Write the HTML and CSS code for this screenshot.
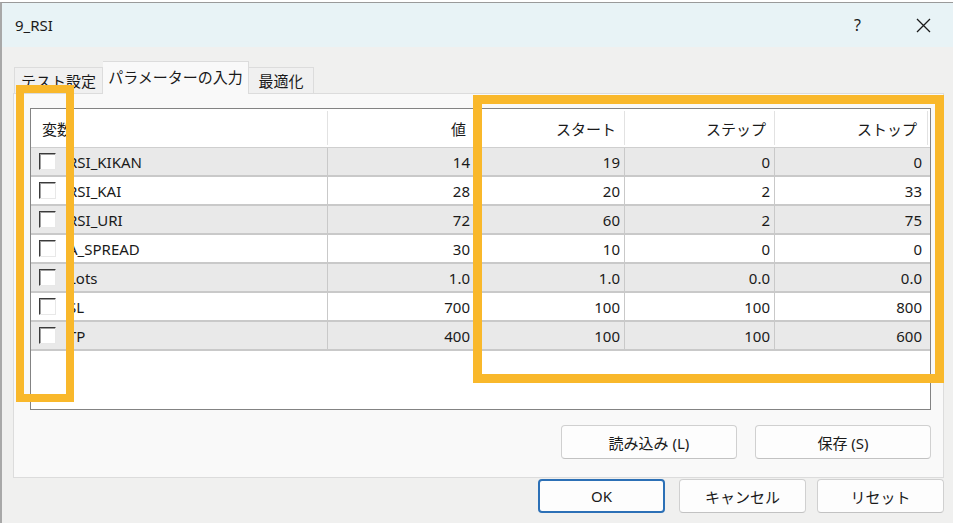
FILE: index.html
```html
<!DOCTYPE html>
<html lang="ja">
<head>
  <meta charset="UTF-8">
  <title>9_RSI</title>
  <link rel="stylesheet" href="styles.css">
</head>
<body>
  <div class="window">
    <div class="titlebar">
      <span class="title">9_RSI</span>
      <span class="help">?</span>
      <span class="close">
        <svg width="15" height="15" viewBox="0 0 15 15"><path d="M1 1 L14 14 M14 1 L1 14" stroke="#1a1a1a" stroke-width="1.3" fill="none"/></svg>
      </span>
    </div>

    <div class="client">
      <div class="tabs">
        <div class="tab">テスト設定</div>
        <div class="tab active">パラメーターの入力</div>
        <div class="tab">最適化</div>
      </div>

      <div class="panel">
        <div class="list">
          <div class="row head">
            <div class="cell name">変数</div>
            <div class="cell num">値</div>
            <div class="cell num">スタート</div>
            <div class="cell num">ステップ</div>
            <div class="cell num">ストップ</div>
          </div>
          <div class="row odd">
            <div class="cell name"><span class="check"></span>RSI_KIKAN</div>
            <div class="cell num">14</div><div class="cell num">19</div><div class="cell num">0</div><div class="cell num">0</div>
          </div>
          <div class="row">
            <div class="cell name"><span class="check"></span>RSI_KAI</div>
            <div class="cell num">28</div><div class="cell num">20</div><div class="cell num">2</div><div class="cell num">33</div>
          </div>
          <div class="row odd">
            <div class="cell name"><span class="check"></span>RSI_URI</div>
            <div class="cell num">72</div><div class="cell num">60</div><div class="cell num">2</div><div class="cell num">75</div>
          </div>
          <div class="row">
            <div class="cell name"><span class="check"></span>A_SPREAD</div>
            <div class="cell num">30</div><div class="cell num">10</div><div class="cell num">0</div><div class="cell num">0</div>
          </div>
          <div class="row odd">
            <div class="cell name"><span class="check"></span>Lots</div>
            <div class="cell num">1.0</div><div class="cell num">1.0</div><div class="cell num">0.0</div><div class="cell num">0.0</div>
          </div>
          <div class="row">
            <div class="cell name"><span class="check"></span>SL</div>
            <div class="cell num">700</div><div class="cell num">100</div><div class="cell num">100</div><div class="cell num">800</div>
          </div>
          <div class="row odd">
            <div class="cell name"><span class="check"></span>TP</div>
            <div class="cell num">400</div><div class="cell num">100</div><div class="cell num">100</div><div class="cell num">600</div>
          </div>
        </div>

        <div class="panel-buttons">
          <button class="btn wide">読み込み (L)</button>
          <button class="btn wide">保存 (S)</button>
        </div>
      </div>

      <div class="dialog-buttons">
        <button class="btn default">OK</button>
        <button class="btn">キャンセル</button>
        <button class="btn">リセット</button>
      </div>
    </div>

    <!-- annotation boxes -->
    <div class="mark mark-check"></div>
    <div class="mark mark-range"></div>
  </div>
</body>
</html>
```

FILE: styles.css
```css
body {
  margin: 0;
  background: #fff;
  font-family: "Noto Sans", "Noto Sans CJK JP", sans-serif;
  font-size: 15px;
  color: #1a1a1a;
}

.window {
  position: relative;
  margin-top: 2px;
  height: 521px;
  border-top: 1px solid #9a9a9a;
  border-left: 2px solid #a8a8a8;
  background: #f0f0ef;
  overflow: hidden;
}

.titlebar {
  height: 44px;
  background: #e8f3f6;
  display: flex;
  align-items: center;
  padding-left: 13px;
}

.title {
  flex: 1;
  font-size: 15px;
}

.help {
  font-size: 16px;
  margin-right: 55px;
}

.close {
  display: flex;
  margin-right: 22px;
}

.client {
  padding: 14px 0 0 11px;
}

.tabs {
  display: flex;
  align-items: flex-end;
  height: 32px;
  padding-left: 1px;
}

.tab {
  box-sizing: border-box;
  height: 26px;
  width: 89px;
  display: flex;
  align-items: center;
  justify-content: center;
  background: #f0f0f0;
  border: 1px solid #dcdcdc;
  border-bottom: none;
  font-size: 15px;
  white-space: nowrap;
}

.tab.active {
  width: 146px;
  height: 33px;
  padding-bottom: 3px;
  background: #f9f9f9;
  margin-bottom: -1px;
  position: relative;
  z-index: 1;
  border-left: none;
}

.tab:last-child {
  width: 65px;
  border-left: none;
}

.panel {
  width: 913px;
  height: 369px;
  background: #f9f9f9;
  border: 1px solid #dcdcdc;
  padding: 14px 0 0 16px;
}

.list {
  width: 899px;
  height: 300px;
  border: 1px solid #838383;
  background: #fff;
}

.row {
  display: grid;
  grid-template-columns: 297px 147px 150px 150px 153px;
  height: 27px;
  border-bottom: 2px solid #c9c9c9;
  background: #fff;
}

.row.odd {
  background: #e9e9e9;
}

.row.head {
  height: 38px;
  border-bottom: 1px solid #cfcfcf;
}

.cell {
  display: flex;
  align-items: center;
  border-right: 1px solid #c9c9c9;
  white-space: nowrap;
}

.cell:last-child {
  border-right: none;
}

.head .cell {
  border-right: 1px solid #e2e2e2;
  margin: 2px 0;
}

.cell.num {
  justify-content: flex-end;
  padding-right: 4px;
}

.cell.num:last-child {
  padding-right: 6px;
}

.head .cell.num {
  padding-right: 8px;
}

.head .cell.num:last-child {
  padding-right: 10px;
}

.cell.name {
  padding-left: 8px;
}

.head .cell.name {
  padding-left: 11px;
}

.check {
  width: 15px;
  height: 15px;
  background: #fff;
  border: 1px solid;
  border-color: #3a3a3a #e8e8e8 #e8e8e8 #3a3a3a;
  box-shadow: inset 1px 1px 0 #a0a0a0;
  margin-right: 12px;
}

.panel-buttons {
  width: 901px;
  display: flex;
  justify-content: flex-end;
  gap: 18px;
  margin-top: 15px;
}

.btn {
  font-family: "Noto Sans", "Noto Sans CJK JP", sans-serif;
  font-size: 15px;
  color: #1a1a1a;
  height: 34px;
  background: #fdfdfd;
  border: 1px solid #d0d0d0;
  border-bottom-color: #c2c2c2;
  border-radius: 4px;
  padding: 0;
}

.btn.wide {
  width: 176px;
}

.dialog-buttons {
  display: flex;
  justify-content: flex-end;
  padding-right: 9px;
  margin-top: 1px;
}

.dialog-buttons .btn {
  width: 127px;
  margin-left: 11px;
}

.dialog-buttons .btn.default {
  border: 2px solid #2c70b6;
  margin-right: 3px;
}

.mark {
  position: absolute;
  border: 8px solid #f9b82b;
  box-sizing: border-box;
  pointer-events: none;
}

.mark-check {
  left: 14px;
  top: 82px;
  width: 58px;
  height: 317px;
}

.mark-range {
  left: 471px;
  top: 92px;
  width: 471px;
  height: 288px;
  border-width: 9px;
}
```
